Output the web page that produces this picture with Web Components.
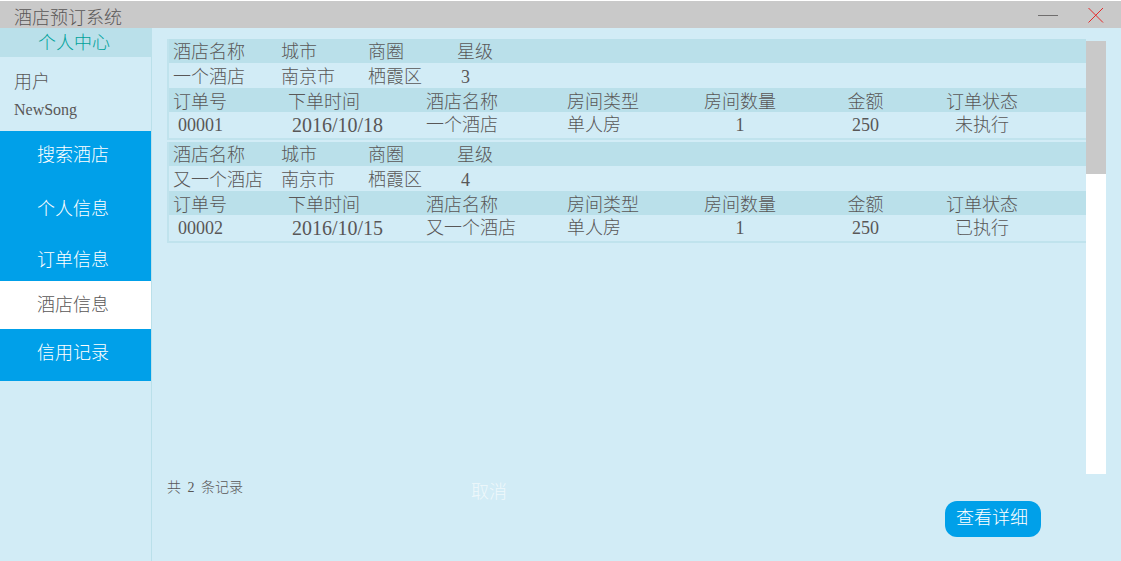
<!DOCTYPE html>
<html lang="zh-CN">
<head>
<meta charset="utf-8">
<meta name="viewport" content="width=device-width, initial-scale=1">
<title>酒店预订系统</title>
<style>
  html {
    --page: #d2ecf6;
    --band: #bae0ea;
    --blue: #00a0e9;
    --grey: #c9c9c9;
    --text: #595757;
    --teal: #00a29a;
  }
  body {
    margin: 0;
    background: var(--page);
    color: var(--text);
    font: 300 18px/24px "Liberation Serif", "Noto Sans CJK SC", serif;
  }
</style>
</head>
<body>
<hotel-app></hotel-app>

<script>
class BaseElement extends HTMLElement {
  render(html) {
    const t = document.createElement('template');
    t.innerHTML = html;
    this.attachShadow({ mode: 'open' }).append(t.content.cloneNode(true));
  }
}

customElements.define('title-bar', class extends BaseElement {
  connectedCallback() {
    this.render(`
      <style>
        :host { display: flex; align-items: center; height: 27px; border-top: 1px solid #fff; background: var(--grey); padding: 0 15px 0 14px; }
        h1 { margin: 0 auto 0 0; padding-top: 6px; font: inherit; }
        button { display: block; border: 0; padding: 0; background: none; height: 20px; width: 20px; }
        .close { margin-left: 28px; }
        svg { display: block; }
      </style>
      <h1><slot></slot></h1>
      <button type="button" aria-label="最小化"><svg width="20" height="20"><path d="M0 10.5H20" stroke="#6f6d6d"/></svg></button>
      <button type="button" class="close" aria-label="关闭"><svg width="20" height="20"><path d="M2.500 3L17 17.500M17 3L2.500 17.500" stroke="#e52a2a"/></svg></button>
    `);
  }
});

customElements.define('nav-item', class extends BaseElement {
  connectedCallback() {
    this.render(`
      <style>
        :host { display: grid; background: var(--blue); color: #fff; }
        :host([current]) { background: #fff; color: var(--text); }
        a { display: flex; align-items: center; padding-left: 37px; color: inherit; text-decoration: none; }
      </style>
      <a href="#"${this.hasAttribute('current') ? ' aria-current="page"' : ''}><slot></slot></a>
    `);
  }
});

customElements.define('side-panel', class extends BaseElement {
  connectedCallback() {
    this.render(`
      <style>
        :host { display: block; border-right: 1px solid var(--band); }
        h2 { margin: 0; padding: 2px 0 0 38px; font: inherit; line-height: 27px; color: var(--teal); background: var(--band); }
        .user { padding: 12px 14px 8px; line-height: 27px; }
        .user p { margin: 0; }
        .name { font-size: 16px; }
        nav { display: grid; grid-template-rows: 48px 60px 42px 48px 48px; padding-bottom: 4px; background: linear-gradient(var(--blue) 0 0); }
      </style>
      <h2>个人中心</h2>
      <div class="user"><p>用户</p><p class="name">NewSong</p></div>
      <nav>
        <nav-item>搜索酒店</nav-item>
        <nav-item>个人信息</nav-item>
        <nav-item>订单信息</nav-item>
        <nav-item current>酒店信息</nav-item>
        <nav-item>信用记录</nav-item>
      </nav>
    `);
  }
});

customElements.define('order-card', class extends BaseElement {
  connectedCallback() {
    const d = this.dataset;
    this.render(`
      <style>
        :host { display: block; border: solid #c0e3ed; border-width: 0 0 2px 2px; }
        table { width: 100%; table-layout: fixed; border-collapse: collapse; }
        th, td { padding: 0; text-align: left; font-weight: inherit; white-space: nowrap; line-height: 22px; }
        thead tr { height: 24px; background: var(--band); }
        tbody tr { height: 25px; }
        .orders tbody tr { height: 26px; }
        th, .hotel td { padding-top: 2px; }
        .orders th { padding-top: 4px; line-height: 20px; }
        .hotel td { padding-top: 3px; }
        th:first-child, td:first-child { padding-left: 4px; }
        .mid { text-align: center; }
        .inset { padding-left: 4px; }
        td.first.inset { padding-left: 9px; }
        .date { font-size: 20px; }
        .c1 { width: 112px } .c2 { width: 87px } .c3 { width: 89px }
        .o1 { width: 119px } .o2 { width: 138px } .o3 { width: 141px } .o4 { width: 123px }
        .o5 { width: 100px } .o6 { width: 151px } .o7 { width: 82px }
      </style>
      <table class="hotel">
        <colgroup><col class="c1"><col class="c2"><col class="c3"><col></colgroup>
        <thead><tr><th>酒店名称</th><th>城市</th><th>商圈</th><th>星级</th></tr></thead>
        <tbody><tr><td>${d.hotel}</td><td>南京市</td><td>栖霞区</td><td class="inset">${d.star}</td></tr></tbody>
      </table>
      <table class="orders">
        <colgroup><col class="o1"><col class="o2"><col class="o3"><col class="o4"><col class="o5"><col class="o6"><col class="o7"><col></colgroup>
        <thead><tr><th>订单号</th><th>下单时间</th><th>酒店名称</th><th>房间类型</th><th class="mid">房间数量</th><th class="mid">金额</th><th class="mid">订单状态</th><th></th></tr></thead>
        <tbody><tr><td class="first inset">${d.no}</td><td class="inset"><span class="date">${d.date}</span></td><td>${d.hotel}</td><td>单人房</td><td class="mid">1</td><td class="mid">250</td><td class="mid">${d.state}</td><td></td></tr></tbody>
      </table>
    `);
  }
});

customElements.define('scroll-track', class extends BaseElement {
  connectedCallback() {
    this.render(`
      <style>
        :host { display: grid; grid-template-rows: 4fr 9fr; width: 20px; background: #fff; }
        div { background: var(--grey); }
      </style>
      <div></div>
    `);
  }
});

customElements.define('action-bar', class extends BaseElement {
  connectedCallback() {
    this.render(`
      <style>
        :host { display: flex; align-items: flex-start; padding-bottom: 24px; }
        p { margin: 0; width: 304px; font-size: 14px; }
        p span { margin: 0 3px; }
        button { border: 0; padding: 0; font: inherit; color: #fff; }
        .cancel { margin-top: 4px; background: none; opacity: .65; }
        .detail { margin: 25px 65px 0 auto; width: 96px; height: 36px; padding: 0 2px 2px 0; border-radius: 12px; background: var(--blue); }
      </style>
      <p>共 <span>2</span> 条记录</p>
      <button type="button" class="cancel">取消</button>
      <button type="button" class="detail">查看详细</button>
    `);
  }
});

customElements.define('hotel-app', class extends BaseElement {
  connectedCallback() {
    this.render(`
      <style>
        :host { display: grid; grid-template: auto 1fr / 152px 1fr; min-height: 100vh; }
        title-bar { grid-column: 1 / -1; }
        main { display: flex; flex-direction: column; padding: 11px 15px 0; min-width: 0; }
        .view { display: flex; flex: 1; }
        .cards { flex: 1; display: flex; flex-direction: column; gap: 2px; min-width: 0; }
        scroll-track { margin-top: 2px; }
        action-bar { padding-top: 2px; }
      </style>
      <title-bar>酒店预订系统</title-bar>
      <side-panel></side-panel>
      <main>
        <div class="view">
          <section class="cards">
            <order-card data-hotel="一个酒店" data-star="3" data-no="00001" data-date="2016/10/18" data-state="未执行"></order-card>
            <order-card data-hotel="又一个酒店" data-star="4" data-no="00002" data-date="2016/10/15" data-state="已执行"></order-card>
          </section>
          <scroll-track></scroll-track>
        </div>
        <action-bar></action-bar>
      </main>
    `);
  }
});
</script>
</body>
</html>
